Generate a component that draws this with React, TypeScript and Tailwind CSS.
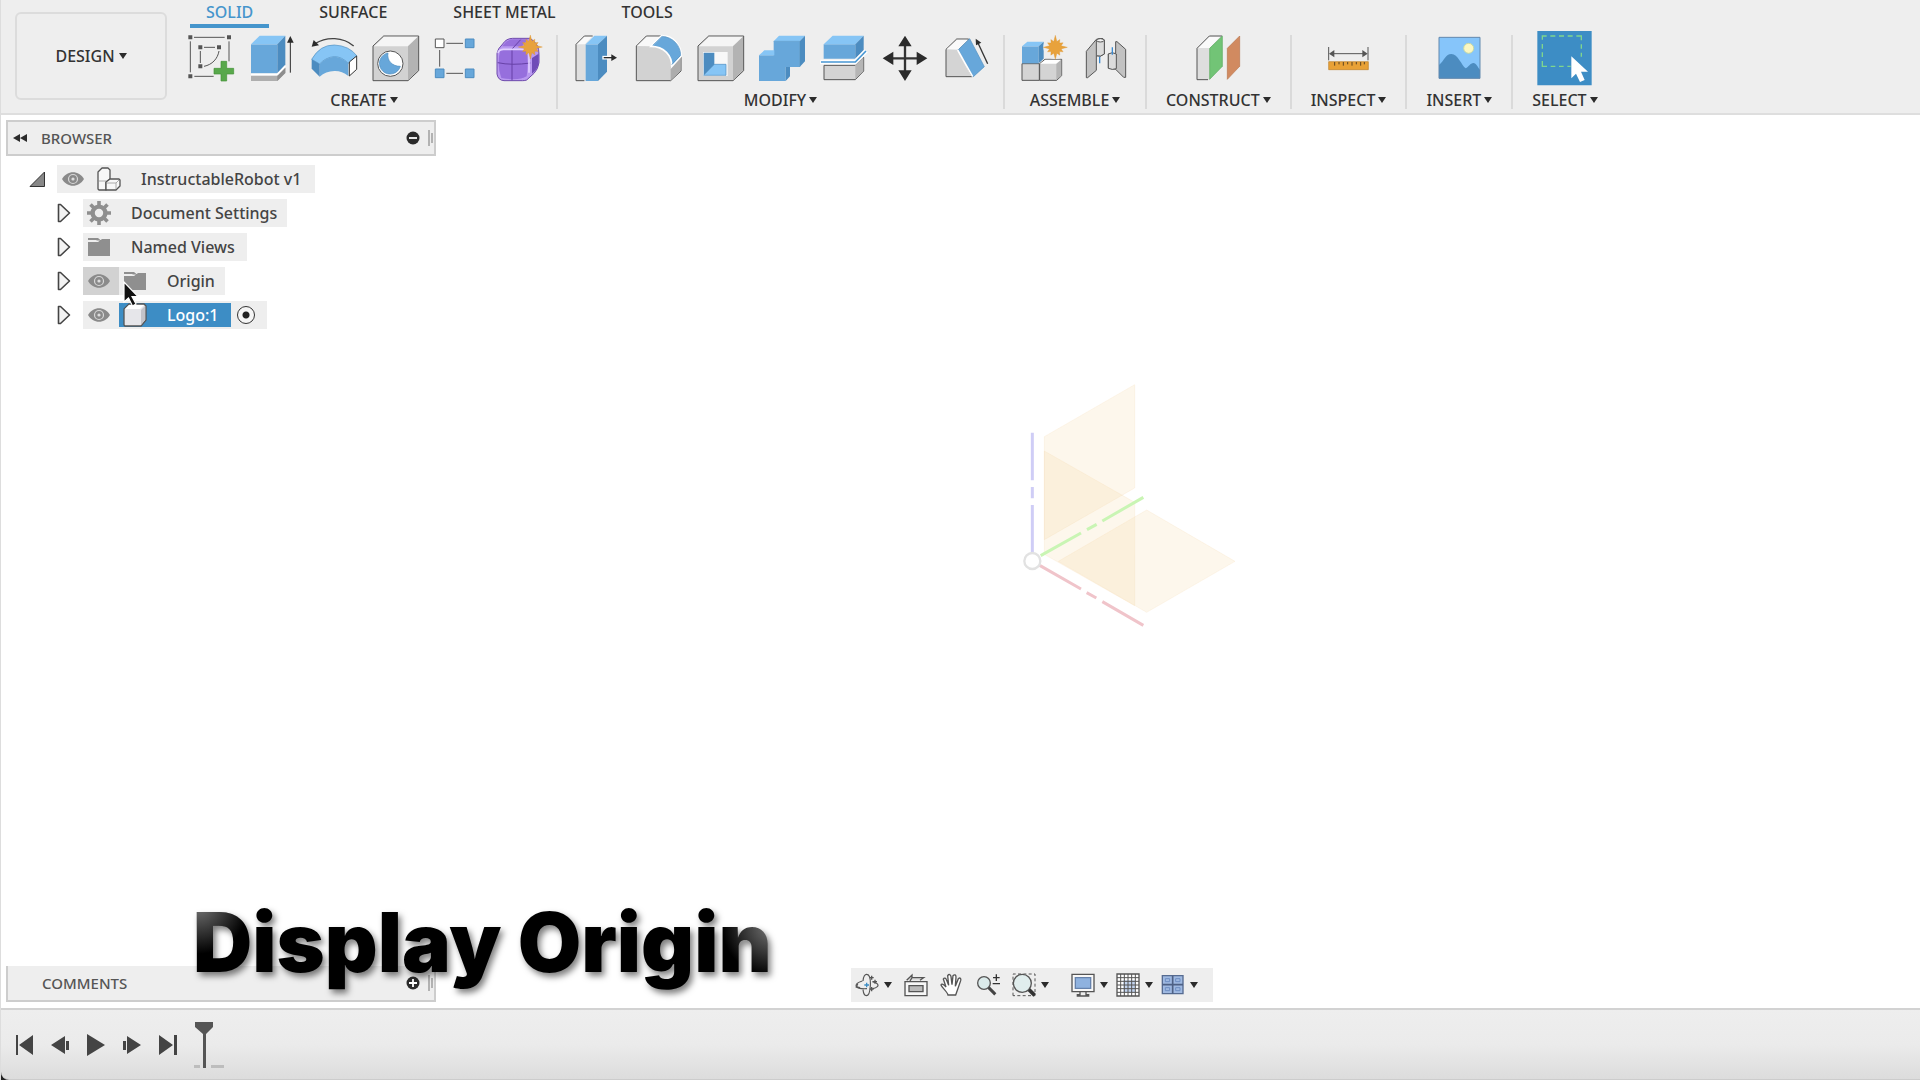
import type { ReactNode } from 'react';

interface IconProps {
  children: ReactNode;
}

/* ---------- shared bits ---------- */

function Caret({ className = '' }: { className?: string }) {
  return (
    <svg viewBox="0 0 8 6" className={`w-2 h-[6px] shrink-0 ${className}`} aria-hidden="true">
      <path d="M0 0h8L4 6z" fill="#2b2b2b" />
    </svg>
  );
}

function ToolSvg({ children }: IconProps) {
  return (
    <svg viewBox="0 0 147 144" className="w-[49px] h-12 overflow-visible" aria-hidden="true">
      {children}
    </svg>
  );
}

function Star({ x, y }: { x: number; y: number }) {
  const points = Array.from({ length: 24 }, (_, i) => {
    const r = i % 2 ? 18 : i % 6 === 0 ? 36 : 27;
    const a = (i * Math.PI) / 12;
    return `${(x + r * Math.sin(a)).toFixed(1)},${(y - r * Math.cos(a)).toFixed(1)}`;
  }).join(' ');
  return <polygon points={points} fill="#e8a23c" stroke="#dc922c" strokeWidth="1" />;
}

/* ---------- ribbon icons ---------- */

const BLUE = '#67a7da';
const LIGHT = '#86c5f5';
const DARK = '#4c8cc0';
const LINE = '#555555';

function SketchIcon() {
  return (
    <ToolSvg>
      <g stroke={LINE} strokeWidth="3" fill="none">
        <path d="M21 10h92M10 22v93M126 22v60M22 127h58M40 51v36M51 40h33M96 51C92 74 76 92 51 97" />
      </g>
      <path d="M4 4h12v12H4zM120 4h12v12h-12zM4 121h12v12H4zM34 34h12v12H34zM90 34h12v12H90zM34 91h12v12H34z" fill={LINE} />
      <path d="M102 82h17v21h21v17h-21v21h-17v-21H81v-17h21z" fill="#58a84b" stroke="#429236" strokeWidth="2" />
    </ToolSvg>
  );
}

function ExtrudeIcon() {
  return (
    <ToolSvg>
      <path d="M9 31h79v87H9z" fill={BLUE} />
      <path d="M9 31L35 5h77L88 31z" fill={LIGHT} />
      <path d="M88 31l24-26v87l-24 26z" fill={DARK} />
      <path d="M9 125h79l24-24v16l-24 24H9z" fill="#aeaeae" />
      <path d="M88 125l24-24v16l-24 24z" fill="#8d8d8d" />
      <path d="M9 121h79l24-25" stroke="#fff" strokeWidth="5" fill="none" />
      <path d="M127 116V20" stroke="#2b2b2b" strokeWidth="3" />
      <path d="M127 6l10 20h-20z" fill="#2b2b2b" />
    </ToolSvg>
  );
}

function RevolveIcon() {
  return (
    <ToolSvg>
      <path d="M8 76Q33 32 76 33Q121 35 144 66L118 88Q98 68 76 68Q50 70 32 90z" fill={LIGHT} stroke={DARK} strokeWidth="2" />
      <path d="M32 90Q50 70 76 68Q98 68 118 88V126Q98 110 76 111Q50 112 32 128z" fill={BLUE} />
      <path d="M8 76l24 14v38L8 104z" fill={DARK} />
      <path d="M121 84l22-18v40l-22 20z" fill="#fff" stroke="#333" strokeWidth="3" />
      <path d="M134 36C102 9 54 7 18 29" stroke="#444" strokeWidth="4" fill="none" />
      <path d="M8 38l6-20 16 16z" fill="#2b2b2b" />
    </ToolSvg>
  );
}

function Box() {
  return (
    <>
      <path d="M9 36L41 6h105v104l-32 30H9z" fill="#d2d2d2" stroke={LINE} strokeWidth="3" />
      <path d="M12 37L42 8h102l-30 29z" fill="#f5f5f5" />
      <path d="M114 37l30-29v101l-30 29z" fill="#b3b3b3" />
    </>
  );
}

function HoleIcon() {
  return (
    <ToolSvg>
      <Box />
      <circle cx="61" cy="89" r="38" fill="#fff" stroke={LINE} strokeWidth="3" />
      <path d="M47 59A32 32 0 1 0 91 97C66 97 50 79 54 57z" fill={BLUE} stroke={DARK} strokeWidth="2" />
    </ToolSvg>
  );
}

function PatternIcon() {
  return (
    <ToolSvg>
      <path d="M46 28h50M46 118h50M26 48v50" stroke={LINE} strokeWidth="3" />
      <path d="M13 15h26v26H13z" fill="#fff" stroke={LINE} strokeWidth="3" />
      <path d="M103 15h26v26h-26zM13 105h26v26H13zM103 105h26v26h-26z" fill={BLUE} stroke={DARK} strokeWidth="3" />
    </ToolSvg>
  );
}

function FormIcon() {
  return (
    <ToolSvg>
      <path d="M15 58Q17 44 32 30Q43 13 62 13h52q28 16 27 48v25q-3 20-15 32l-22 20q-5 2-12 2H36q-18-1-21-20z" fill="#b999f0" stroke="#6e4bab" strokeWidth="3" />
      <path d="M34 32Q45 16 62 16h46L90 37H30z" fill="#9870dc" />
      <path d="M120 72l20-13v31q-3 15-20 29z" fill="#6f4bb7" />
      <path d="M24 51q23-10 80 0 6 35 0 76-24 14-76 5-14-36-4-81z" fill="#966fdd" />
      <path d="M60 48v91M17 86q43 9 98 1M60 45L86 17" stroke="#6741a7" strokeWidth="3" fill="none" />
      <path d="M18 57q2-10 15-11h59q18 1 19 12v58" stroke="#e0cfff" strokeWidth="5" fill="none" />
      <Star x={115} y={39} />
    </ToolSvg>
  );
}

function PressPullIcon() {
  return (
    <ToolSvg>
      <path d="M9 31L34 6h25L38 31v109H9z" fill="#dfdfdf" />
      <path d="M9 31L34 6h25L36 31z" fill="#fafafa" />
      <path d="M59 6H34L9 31v109h25" fill="none" stroke={LINE} strokeWidth="3" />
      <path d="M38 31h37v110H38z" fill={BLUE} />
      <path d="M38 31L64 5h38L75 31z" fill={LIGHT} />
      <path d="M75 31l27-26v108l-27 28z" fill={DARK} />
      <path d="M88 71h28" stroke="#fff" strokeWidth="11" />
      <path d="M92 71h28" stroke="#2b2b2b" strokeWidth="4" />
      <path d="M132 71l-17-10v20z" fill="#2b2b2b" />
    </ToolSvg>
  );
}

function FilletIcon() {
  return (
    <ToolSvg>
      <path d="M7 36L37 6h51c33 4 53 31 53 61v44l-31 29H7z" fill="#d2d2d2" stroke={LINE} strokeWidth="3" />
      <path d="M9 36L38 8h46L54 37z" fill="#f8f8f8" />
      <path d="M110 98l30-29v41l-30 29z" fill="#adadad" />
      <path d="M51 37L83 5c34 0 59 28 59 61l-29 32c2-33-23-61-62-61z" fill={BLUE} stroke="#fff" strokeWidth="5" />
      <path d="M56 34L84 7c33 2 56 28 56 57l-27 28" stroke={DARK} strokeWidth="2" fill="none" />
    </ToolSvg>
  );
}

function ShellIcon() {
  return (
    <ToolSvg>
      <Box />
      <path d="M24 54h74v72H24z" fill="#f8f8f8" />
      <path d="M26 56h32v36L26 124z" fill={DARK} />
      <path d="M58 91h35v33H26z" fill={LIGHT} stroke={DARK} strokeWidth="2" />
    </ToolSvg>
  );
}

function CombineIcon() {
  return (
    <ToolSvg>
      <path d="M9 64h44V22h78v77h-42v42H9z" fill={BLUE} />
      <path d="M9 64l16-15h30v15zM53 22L69 5h78l-16 17z" fill={LIGHT} />
      <path d="M131 22l16-17v77l-16 17zM89 99h13v28l-13 14z" fill={DARK} />
      <path d="M53 22h78v77" fill="none" stroke="#5597cb" strokeWidth="2" />
    </ToolSvg>
  );
}

function SplitIcon() {
  return (
    <ToolSvg>
      <path d="M20 31h95v43H20z" fill={BLUE} />
      <path d="M20 31L47 5h93l-25 26z" fill={LIGHT} />
      <path d="M115 31l25-26v43l-25 26z" fill={DARK} />
      <path d="M21 94h94l25-24v41l-25 26H21z" fill="#d4d4d4" stroke={LINE} strokeWidth="3" />
      <path d="M115 94l24-24v40l-24 26z" fill="#b5b5b5" />
      <path d="M10 84h104l34-34" stroke="#fff" strokeWidth="13" fill="none" />
      <path d="M12 84h103l32-33" stroke="#4797d3" strokeWidth="5" fill="none" />
    </ToolSvg>
  );
}

function MoveIcon() {
  return (
    <ToolSvg>
      <path d="M81 20v108M30 73h102" stroke="#333" strokeWidth="7" />
      <path d="M81 5l20 32H61zM81 141l20-32H61zM14 73l32-20v40zM148 73l-32-20v40z" fill="#2b2b2b" />
    </ToolSvg>
  );
}

function DraftIcon() {
  return (
    <ToolSvg>
      <path d="M21 46l32-31h36L58 47l42 81H21z" fill="#d4d4d4" stroke={LINE} strokeWidth="3" />
      <path d="M23 46l31-29h34L58 47z" fill="#fafafa" />
      <path d="M58 47l34-33 44 84-34 31z" fill={BLUE} stroke={DARK} strokeWidth="2" />
      <path d="M56 48l45 80" stroke="#fff" strokeWidth="5" />
      <path d="M146 89L117 27" stroke="#333" strokeWidth="4" />
      <path d="M110 14l17 12-16 8z" fill="#2b2b2b" />
    </ToolSvg>
  );
}

function ComponentIcon() {
  return (
    <ToolSvg>
      <path d="M6 89h52v50H6z" fill="#d4d4d4" stroke={LINE} strokeWidth="3" />
      <path d="M59 89l16-13h50v49l-15 14H59z" fill="#d4d4d4" stroke={LINE} strokeWidth="3" />
      <path d="M60 89l16-12h47l-14 12z" fill="#fff" />
      <path d="M109 90l15-13v48l-15 13z" fill="#b5b5b5" />
      <path d="M6 37h50v51H6z" fill={BLUE} />
      <path d="M6 37l16-14h49L56 37z" fill={LIGHT} />
      <path d="M56 37l15-14v51L56 88z" fill={DARK} />
      <circle cx="106" cy="39" r="36" fill="#eeeeee" />
      <Star x={106} y={40} />
    </ToolSvg>
  );
}

function JointIcon() {
  return (
    <ToolSvg>
      <g stroke={LINE} strokeWidth="3" strokeLinejoin="round">
        <path d="M16 52l30-36 10-2h10q5 3 4 8v38q-12 11-24 5v44l-26 22h-4z" fill="#c2c2c2" />
        <path d="M46 18q12-8 24 1v41q-12 10-24 5z" fill="#dcdcdc" />
        <ellipse cx="58" cy="19" rx="11" ry="5" fill="#f4f4f4" />
        <path d="M134 46l-26-23h-4v35l-22 2v42l22 4 24 24h6z" fill="#c2c2c2" />
        <path d="M82 60q12-8 24 0v44q-12 5-24-1z" fill="#dcdcdc" />
      </g>
      <path d="M56 68v20M94 40v22" stroke="#3c8bd1" strokeWidth="4" />
    </ToolSvg>
  );
}

function PlaneIcon() {
  return (
    <ToolSvg>
      <path d="M9 43L46 6h38L47 43v94H9z" fill="#dedede" />
      <path d="M11 42L47 7h33L47 42z" fill="#fafafa" />
      <path d="M84 6H46L9 43v94h33" fill="none" stroke={LINE} strokeWidth="3" />
      <path d="M47 43L85 6v91l-38 39z" fill="#72c476" stroke="#56a85b" strokeWidth="2" />
      <path d="M100 43l37-37v91l-37 39z" fill="#d18a60" stroke="#b9744c" strokeWidth="2" />
    </ToolSvg>
  );
}

function MeasureIcon() {
  return (
    <ToolSvg>
      <path d="M14 39v40M132 39v40M20 59h106" stroke={LINE} strokeWidth="3" />
      <path d="M15 59l16-11v22zM131 59l-16-11v22z" fill={LINE} />
      <path d="M14 83h119v24H14z" fill="#e8a136" stroke="#bd8128" strokeWidth="2" />
      <path d="M32 84v11M45 84v7M58 84v11M71 84v7M84 84v11M97 84v7M110 84v11M121 84v7" stroke="#5d4522" strokeWidth="3" />
    </ToolSvg>
  );
}

function ImageIcon() {
  return (
    <ToolSvg>
      <path d="M12 10h123v123H12z" fill="#86c5fa" />
      <path d="M12 93c16-13 20-33 37-33 20 0 31 35 43 43 9-4 14-16 23-16 9 0 13 13 20 20v26H12z" fill={DARK} />
      <circle cx="101" cy="43" r="15" fill="#fbf7c2" stroke="#c6d9a5" strokeWidth="3" />
      <path d="M12 10h123v123H12z" fill="none" stroke="#6389ae" strokeWidth="3" />
    </ToolSvg>
  );
}

function SelectIcon() {
  return (
    <ToolSvg>
      <path d="M-8 -9h163v163H-8z" fill="#3d8dc5" />
      <path d="M7 17V6h13M31 6h15M57 6h15M83 6h15M109 6h15v13M124 31v13M124 56v12M7 30v14M7 55v14M7 81v16h14M32 97h14M57 97h14M82 97h10" fill="none" stroke="#7fd68d" strokeWidth="4" />
      <path d="M94 67v66l14-14 12 25 14-6-11-25h21z" fill="#fff" />
    </ToolSvg>
  );
}

/* ---------- ribbon ---------- */

interface Tool {
  name: string;
  icon: ReactNode;
}

const groups: { label: string; tools: Tool[] }[] = [
  {
    label: 'CREATE',
    tools: [
      { name: 'Create Sketch', icon: <SketchIcon /> },
      { name: 'Extrude', icon: <ExtrudeIcon /> },
      { name: 'Revolve', icon: <RevolveIcon /> },
      { name: 'Hole', icon: <HoleIcon /> },
      { name: 'Rectangular Pattern', icon: <PatternIcon /> },
      { name: 'Create Form', icon: <FormIcon /> },
    ],
  },
  {
    label: 'MODIFY',
    tools: [
      { name: 'Press Pull', icon: <PressPullIcon /> },
      { name: 'Fillet', icon: <FilletIcon /> },
      { name: 'Shell', icon: <ShellIcon /> },
      { name: 'Combine', icon: <CombineIcon /> },
      { name: 'Split Body', icon: <SplitIcon /> },
      { name: 'Move', icon: <MoveIcon /> },
      { name: 'Draft', icon: <DraftIcon /> },
    ],
  },
  {
    label: 'ASSEMBLE',
    tools: [
      { name: 'New Component', icon: <ComponentIcon /> },
      { name: 'Joint', icon: <JointIcon /> },
    ],
  },
  { label: 'CONSTRUCT', tools: [{ name: 'Offset Plane', icon: <PlaneIcon /> }] },
  { label: 'INSPECT', tools: [{ name: 'Measure', icon: <MeasureIcon /> }] },
  { label: 'INSERT', tools: [{ name: 'Canvas', icon: <ImageIcon /> }] },
  { label: 'SELECT', tools: [{ name: 'Select', icon: <SelectIcon /> }] },
];

const tabs = ['SOLID', 'SURFACE', 'SHEET METAL', 'TOOLS'];

function Ribbon() {
  return (
    <header className="flex bg-[#eeeeee] border-b-2 border-[#dedede] text-base leading-5 font-medium text-[#333]">
      <button className="flex items-center justify-center gap-1 w-[152px] h-[88px] mt-3 ml-[14px] mr-[5px] shrink-0 rounded-md border-2 border-[#dcdcdc]">
        DESIGN
        <Caret />
      </button>
      <div className="flex flex-col">
        <nav className="flex gap-[34px] pl-[18px]">
          {tabs.map((tab, i) => (
            <button
              key={tab}
              className={`px-4 pt-[2px] pb-[2px] h-7 leading-5 border-b-4 ${
                i === 0 ? 'text-[#4595cc] border-[#4595cc]' : 'border-transparent'
              }`}
            >
              {tab}
            </button>
          ))}
        </nav>
        <div className="flex pt-[6px] pb-[3px]">
          {groups.map((group, i) => (
            <div key={group.label} className="flex">
              {i > 0 && <div className="w-[2px] h-[74px] mt-px bg-[#dadada]" />}
              <div className={`flex flex-col items-center ${group.tools.length > 1 ? 'px-[9px]' : 'px-[19px]'}`}>
                <div className="flex">
                  {group.tools.map((tool) => (
                    <button key={tool.name} title={tool.name} aria-label={tool.name} className="flex justify-center w-[61px]">
                      {tool.icon}
                    </button>
                  ))}
                </div>
                <button className="flex items-center gap-[3px] mt-2 whitespace-nowrap">
                  {group.label}
                  <Caret />
                </button>
              </div>
            </div>
          ))}
        </div>
      </div>
    </header>
  );
}

/* ---------- browser tree ---------- */

function EyeIcon() {
  return (
    <svg viewBox="0 0 24 24" className="w-6 h-6" aria-hidden="true">
      <path d="M1 12C6 3 18 3 23 12 18 21 6 21 1 12z" fill="#8a8a8a" />
      <circle cx="12" cy="12" r="4.500" fill="#8a8a8a" stroke="#d8d8d8" strokeWidth="1.200" />
      <circle cx="12" cy="12" r="1.600" fill="#dddddd" />
    </svg>
  );
}

function FolderIcon() {
  return (
    <svg viewBox="0 0 24 24" className="w-6 h-6" aria-hidden="true">
      <path d="M1 3h10l3 2.500h-4L9 5H1zM1 7h10l4-3h8v17H1z" fill="#8f8f8f" />
    </svg>
  );
}

function GearIcon() {
  return (
    <svg viewBox="0 0 24 24" className="w-6 h-6" aria-hidden="true">
      <g stroke="#8f8f8f" strokeWidth="3.600">
        <path d="M12 0v24M0 12h24M3.500 3.500l17 17M3.500 20.500l17-17" />
      </g>
      <circle cx="12" cy="12" r="6.400" fill="#eeeeee" stroke="#8f8f8f" strokeWidth="4.400" />
    </svg>
  );
}

function AssemblyIcon() {
  return (
    <svg viewBox="0 0 24 24" className="w-6 h-6" aria-hidden="true">
      <g fill="#f7f7f7" stroke="#555" strokeWidth="1.300" strokeLinejoin="round">
        <path d="M1 5l4-4h6l2 2v9l-4 3v8H2l-1-1z" />
        <path d="M9 15l4-3h9l1 1v6l-4 4H9z" />
      </g>
      <path d="M2 14h7M19 16v6M10 16h9l3-3" stroke="#aaa" fill="none" />
    </svg>
  );
}

function CubeIcon() {
  return (
    <svg viewBox="0 0 24 24" className="w-6 h-6" aria-hidden="true">
      <path d="M1 6l5-5h15l2 2v14l-5 6H2l-1-1z" fill="#e6e6ea" stroke="#555" strokeWidth="1.300" strokeLinejoin="round" />
      <path d="M2 6l4-4h15l-4 4z" fill="#fff" />
      <path d="M18 7l4-4v14l-4 5z" fill="#c3c3c9" />
    </svg>
  );
}

function Expander() {
  return (
    <button aria-label="Expand" className="w-[26px] shrink-0">
      <svg viewBox="0 0 14 20" className="w-[14px] h-5">
        <path d="M1.500 1.500h2L12.500 10l-9 8.500h-2z" fill="#f3f3f3" stroke="#444" strokeWidth="1.600" strokeLinejoin="round" />
      </svg>
    </button>
  );
}

function Grip() {
  return (
    <svg viewBox="0 0 5 16" className="w-[5px] h-4" aria-hidden="true">
      <path d="M1 0v16M4 3v10" stroke="#777" />
    </svg>
  );
}

function RoundSign({ plus = false }: { plus?: boolean }) {
  return (
    <svg viewBox="0 0 14 14" className="w-[14px] h-[14px]" aria-hidden="true">
      <circle cx="7" cy="7" r="6.500" fill="#2b2b2b" />
      <path d={plus ? 'M3 7h8M7 3v8' : 'M3 7h8'} stroke="#fff" strokeWidth="1.800" />
    </svg>
  );
}

function BrowserPanel() {
  return (
    <section className="w-[430px]">
      <div className="flex items-center h-9 border-2 border-[#cdcdcd] bg-[#eeeeee] pl-[5px] pr-px">
        <button aria-label="Collapse browser" className="w-7">
          <svg viewBox="0 0 14 8" className="w-[14px] h-2">
            <path d="M7 0v8L0 4zM14 0v8L7 4z" fill="#2b2b2b" />
          </svg>
        </button>
        <h2 className="text-[15px] leading-5 font-medium text-[#555]">BROWSER</h2>
        <button aria-label="Display options" className="ml-auto mr-2">
          <RoundSign />
        </button>
        <Grip />
      </div>
      <ul className="flex flex-col gap-[6px] mt-[9px] ml-[51px] text-base leading-5 font-medium text-[#444]">
        <li className="flex items-center h-7">
          <button aria-label="Collapse" className="-ml-7 mr-3">
            <svg viewBox="0 0 16 16" className="w-4 h-4">
              <path d="M1 15.500L15.500 1v14.500z" fill="#888" stroke="#333" />
            </svg>
          </button>
          <div className="flex items-center h-7 pl-1 pr-[14px] bg-[#eeeeee]">
            <button aria-label="Toggle InstructableRobot visibility" className="mr-3">
              <EyeIcon />
            </button>
            <AssemblyIcon />
            <span className="ml-5">InstructableRobot v1</span>
          </div>
        </li>
        <li className="flex items-center h-7">
          <Expander />
          <div className="flex items-center h-7 pl-1 pr-[10px] bg-[#eeeeee]">
            <GearIcon />
            <span className="ml-5">Document Settings</span>
          </div>
        </li>
        <li className="flex items-center h-7">
          <Expander />
          <div className="flex items-center h-7 pl-1 pr-3 bg-[#eeeeee]">
            <FolderIcon />
            <span className="ml-5">Named Views</span>
          </div>
        </li>
        <li className="flex items-center h-7">
          <Expander />
          <div className="relative flex items-center h-7 pr-[10px] bg-[#eeeeee]">
            <button aria-label="Toggle Origin visibility" className="flex items-center h-7 pl-1 pr-2 mr-1 bg-[#d2d2d2]">
              <EyeIcon />
            </button>
            <FolderIcon />
            <span className="ml-5">Origin</span>
            {/* Pointer */}
            <svg viewBox="0 0 16 26" className="absolute left-10 top-[14px] z-10 w-4 h-[26px]" aria-hidden="true">
              <path d="M1 1v20l4.500-4 4 8 3.500-2-4-7.500h6z" fill="#111" stroke="#fff" strokeWidth="1.200" />
            </svg>
          </div>
        </li>
        <li className="flex items-center h-7">
          <Expander />
          <div className="flex items-center h-7 pr-3 bg-[#eeeeee]">
            <button aria-label="Toggle Logo visibility" className="flex items-center h-7 pl-1 pr-2">
              <EyeIcon />
            </button>
            <div className="flex items-center h-6 pl-1 pr-3 bg-[#3d8dc5] text-white">
              <CubeIcon />
              <span className="ml-5">Logo:1</span>
            </div>
            <input type="radio" name="active" defaultChecked aria-label="Activate Logo" className="appearance-none ml-[6px] w-[18px] h-[18px] rounded-full border border-[#333] bg-[radial-gradient(circle,#222_3px,#f5f5f5_4px)]" />
          </div>
        </li>
      </ul>
    </section>
  );
}

/* ---------- navigation bar ---------- */

function NavSvg({ children }: IconProps) {
  return (
    <svg viewBox="0 0 72 72" className="w-6 h-6" fill="none" stroke="#555" strokeWidth="4" aria-hidden="true">
      {children}
    </svg>
  );
}

function NavButton({ label, menu = false, children }: { label: string; menu?: boolean; children: ReactNode }) {
  return (
    <button aria-label={label} title={label} className="flex items-center gap-[5px]">
      <NavSvg>{children}</NavSvg>
      {menu && <Caret />}
    </button>
  );
}

function NavigationBar() {
  return (
    <div className="flex items-center gap-3 h-[34px] pl-1 pr-[15px] bg-[#eeeeee]">
      <NavButton label="Orbit" menu>
        <path d="M22 24C8 28 1 34 4 40c3 5 16 8 32 7M52 26c15 3 20 10 15 15-3 3-8 5-14 6M24 24C25 10 30 3 36 4c7 1 11 15 10 34-1 18-6 30-12 30-5 0-9-9-10-18" strokeWidth="3.500" />
        <path d="M8 32l-4 10 11 2M44 48h12M50 42v13M50 8v12M44 14h12M54 26h12M60 20v12" />
        <path d="M28 36h14M35 29v14" stroke="#3d8dc5" />
      </NavButton>
      <NavButton label="Look At">
        <path d="M3 26h66v42H3z" fill="#f7f7f7" />
        <path d="M15 38h42v18H15z" fill="#bbb" />
        <path d="M8 22L24 6v8h35L48 22M24 14L18 24" fill="#ddd" />
      </NavButton>
      <NavButton label="Pan">
        <path d="M24 66C22 56 6 44 3 36c2-5 8-2 15 6L10 18c3-5 8-3 10 4l6 15-3-29c4-6 9-4 10 3l3 24 3-27c5-5 9-2 9 4l-2 28 9-23c5-4 9-1 7 6L52 52l-5 14z" fill="#fff" />
      </NavButton>
      <NavButton label="Zoom">
        <circle cx="24" cy="30" r="19" fill="#dbeaea" />
        <path d="M38 44l20 20" stroke="#444" strokeWidth="9" />
        <path d="M50 32h22M51 14h20M61 4v20" stroke="#333" />
      </NavButton>
      <NavButton label="Fit" menu>
        <path d="M3 68V3h66v65z" strokeDasharray="9 7" strokeWidth="3" />
        <circle cx="31" cy="31" r="27" fill="#e0eded" />
        <path d="M51 50l17 17" stroke="#333" strokeWidth="11" />
      </NavButton>
      <div className="flex items-center gap-2 ml-[10px]">
        <NavButton label="Display Settings" menu>
          <path d="M3 4h66v52H3z" fill="#f7f7f7" />
          <path d="M13 14h46v32H13z" fill="#8fb2df" stroke="#6682ac" />
          <path d="M27 57v8h-8v4h34v-4h-8v-8" />
        </NavButton>
        <NavButton label="Grid and Snaps" menu>
          <path d="M3 3h66v66H3z" fill="#fff" />
          <path d="M22 22h36v36H22z" fill="#c2d4ef" stroke="none" />
          <path d="M14 3v66M25 3v66M36 3v66M47 3v66M58 3v66M3 14h66M3 25h66M3 36h66M3 47h66M3 58h66" strokeWidth="3" />
        </NavButton>
        <NavButton label="Viewports" menu>
          <path d="M4 8h62v54H4z" fill="#9fb9e1" stroke="#566b91" />
          <path d="M35 8v54M4 35h62" stroke="#4e6185" strokeWidth="5" />
          <path d="M13 17h13v9H13zM44 17h13v9H44zM13 44h13v9H13zM44 44h13v9H44z" stroke="#6e8ec2" strokeWidth="3" />
        </NavButton>
      </div>
    </div>
  );
}

/* ---------- canvas ---------- */

function OriginPlanes() {
  return (
    <svg viewBox="0 0 780 810" className="absolute left-[999px] top-[255px] w-[260px] h-[270px]" aria-hidden="true">
      <g fill="#f6d8a2" fillOpacity="0.2" stroke="#f3d6a8" strokeOpacity="0.2" strokeWidth="3">
        <path d="M133 200L404 44v310L133 509z" />
        <path d="M133 243l271 154v310L133 553z" />
        <path d="M175 574l265-154 265 154-265 153z" />
      </g>
      <g strokeWidth="9" fill="none">
        <path d="M97 188v143M97 351v34M97 405v143" stroke="#cfcdf6" />
        <path d="M122 557l121-68M261 479l29-16M307 453l123-71" stroke="#c9f5b4" />
        <path d="M119 586l124 71M260 668l29 16M307 695l123 71" stroke="#f0c4ca" />
      </g>
      <circle cx="97" cy="573" r="24" fill="#fff" stroke="#e2e2e2" strokeWidth="7" />
    </svg>
  );
}

function Canvas() {
  return (
    <main className="relative flex flex-col flex-1 bg-white px-[5px] pt-[5px] pb-[6px]">
      <BrowserPanel />
      <OriginPlanes />
      <div className="grid grid-cols-[430px_1fr] items-end mt-auto">
        <div className="flex items-center h-9 pl-[34px] pr-px border-2 border-t-0 border-[#cdcdcd] bg-[#eeeeee]">
          <h2 className="text-[15px] leading-5 font-medium text-[#555]">COMMENTS</h2>
          <button aria-label="Expand comments" className="ml-auto mr-2">
            <RoundSign plus />
          </button>
          <Grip />
        </div>
        <div className="flex pl-[415px]">
          <NavigationBar />
        </div>
      </div>
      {/* Caption over the canvas */}
      <p className="absolute left-48 bottom-[9px] z-10 whitespace-nowrap font-[Inter,sans-serif] font-black text-[82px] leading-[112px] text-transparent bg-clip-text bg-black bg-[radial-gradient(circle_at_1%_15%,#777,transparent_50px),radial-gradient(circle_at_100%_35%,#777,transparent_50px)] drop-shadow-[3px_4px_3px_rgba(0,0,0,0.5)]">
        Display Origin
      </p>
    </main>
  );
}

/* ---------- timeline ---------- */

const playback = [
  { label: 'Go to start', d: 'M1 1h2v20H1zM18 1v20L4 11z' },
  { label: 'Step back', d: 'M0 11L14 2v18zM15 7h3v9h-3z' },
  { label: 'Play', d: 'M0 0l18 11L0 22z' },
  { label: 'Step forward', d: 'M0 7h3v9H0zM4 2l14 9-14 9z' },
  { label: 'Go to end', d: 'M0 1v20l14-10zM15 1h3v20h-3z' },
];

function Timeline() {
  return (
    <footer className="bg-[#222]">
      <div className="flex items-center h-[72px] pl-[5px] rounded-bl-lg border-t-2 border-t-[#d2d2d2] border-b border-b-[#cccccc] bg-linear-to-b from-[#eeeeee] via-[#ebebeb] to-[#dcdcdc]">
        {playback.map((item) => (
          <button key={item.label} aria-label={item.label} className="flex justify-center w-9">
            <svg viewBox="0 0 18 22" className="w-[18px] h-[22px]">
              <path d={item.d} fill="#444" />
            </svg>
          </button>
        ))}
        <svg viewBox="0 0 30 48" className="w-[30px] h-12 ml-2" aria-hidden="true">
          <path d="M0 44h6v3H0zM17 44h13v3H17z" fill="#bdbdbd" />
          <path d="M1 1h18v5l-7 7v34H9V13L1 6z" fill="#555" />
        </svg>
      </div>
    </footer>
  );
}

export default function App() {
  return (
    <div className="flex flex-col min-h-screen border-l border-[#dddddd] font-['Noto_Sans','Open_Sans',sans-serif]">
      <Ribbon />
      <Canvas />
      <Timeline />
    </div>
  );
}
